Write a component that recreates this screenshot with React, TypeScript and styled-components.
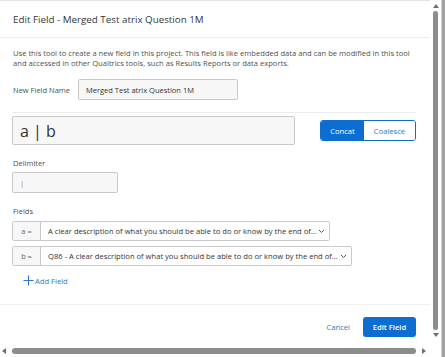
import styled, { createGlobalStyle } from "styled-components";

const GlobalStyle = createGlobalStyle`
  html, body {
    margin: 0;
    padding: 0;
    background: #ffffff;
  }
  body {
    font-family: "Open Sans", "Noto Sans", sans-serif;
    color: #333333;
  }
`;

const Frame = styled.div`
  width: 445px;
  height: 357px;
  display: grid;
  grid-template-columns: 430px 11px 4px;
  grid-template-rows: 345px 12px;
  background: #ffffff;
  overflow: hidden;
`;

const Dialog = styled.div`
  grid-column: 1;
  grid-row: 1;
  display: flex;
  flex-direction: column;
  border-top: 1px solid #e4e4e4;
  box-sizing: border-box;
`;

const Header = styled.div`
  height: 36px;
  flex: none;
  display: flex;
  align-items: center;
  padding: 0 13px;
  border-bottom: 1px solid #ececec;
  font-size: 9.8px;
  color: #353535;
`;

const Body = styled.div`
  flex: 1;
  padding: 10px 14px 0 12px;
  display: flex;
  flex-direction: column;
  align-items: flex-start;
`;

const Description = styled.p`
  margin: 0 0 0 1px;
  font-size: 7.6px;
  line-height: 10px;
  color: #505050;
  white-space: nowrap;
`;

const NameSection = styled.div`
  align-self: stretch;
  margin-top: 11px;
  padding-bottom: 12px;
  border-bottom: 1px solid #ececec;
  display: flex;
  align-items: center;
  gap: 8px;
`;

const Label = styled.span<{ $top?: number }>`
  display: block;
  margin-top: ${(p) => p.$top ?? 0}px;
  margin-left: 1px;
  font-size: 7.5px;
  line-height: 10px;
  color: #505050;
`;

const TextInput = styled.div<{ $w: number; $h: number; $size?: number }>`
  box-sizing: border-box;
  width: ${(p) => p.$w}px;
  height: ${(p) => p.$h}px;
  padding: 0 7px;
  display: flex;
  align-items: center;
  background: #f7f7f7;
  border: 1px solid #c9c9c9;
  border-radius: 2px;
  font-size: ${(p) => p.$size ?? 7.5}px;
  color: #333333;
`;

const FormulaRow = styled.div`
  align-self: stretch;
  margin-top: 3px;
  display: flex;
  align-items: center;
  justify-content: space-between;
`;

const Segmented = styled.div`
  display: flex;
  height: 21px;
  border: 1px solid #0b6ed0;
  border-radius: 3px;
  overflow: hidden;
  box-sizing: border-box;
`;

const Segment = styled.div<{ $active?: boolean; $w: number }>`
  width: ${(p) => p.$w}px;
  display: flex;
  align-items: center;
  justify-content: center;
  font-size: 7.6px;
  background: ${(p) => (p.$active ? "#0b6ed0" : "#ffffff")};
  color: ${(p) => (p.$active ? "#ffffff" : "#2a78c8")};
`;

const FieldRow = styled.div<{ $w: number; $top: number }>`
  box-sizing: border-box;
  width: ${(p) => p.$w}px;
  height: 20px;
  margin-top: ${(p) => p.$top}px;
  display: flex;
  border: 1px solid #c9c9c9;
  border-radius: 2px;
  background: #ffffff;
`;

const Prefix = styled.div`
  width: 27px;
  flex: none;
  display: flex;
  align-items: center;
  justify-content: center;
  background: #f7f7f7;
  border-right: 1px solid #c9c9c9;
  font-size: 7.4px;
  color: #666666;
`;

const SelectText = styled.div`
  flex: 1;
  display: flex;
  align-items: center;
  justify-content: space-between;
  padding: 0 4px 0 7px;
  font-size: 7.6px;
  color: #333333;
  white-space: nowrap;
`;

const AddField = styled.div`
  margin: 9px 0 0 11px;
  display: flex;
  align-items: center;
  gap: 1px;
  font-size: 7.6px;
  line-height: 10px;
  color: #2a78c8;
`;

const Footer = styled.div`
  height: 41px;
  flex: none;
  box-sizing: border-box;
  border-top: 1px solid #efefef;
  padding: 12px 14px 0 0;
  display: flex;
  justify-content: flex-end;
  align-items: flex-start;
  gap: 13px;
`;

const LinkButton = styled.div`
  height: 20px;
  display: flex;
  align-items: center;
  font-size: 7.6px;
  color: #2a78c8;
`;

const PrimaryButton = styled.div`
  width: 53px;
  height: 20px;
  display: flex;
  align-items: center;
  justify-content: center;
  border-radius: 3px;
  background: #0b6ed0;
  color: #ffffff;
  font-size: 7.6px;
  font-weight: 600;
`;

const VTrack = styled.div`
  grid-column: 2;
  grid-row: 1 / span 2;
  display: flex;
  flex-direction: column;
  align-items: center;
  padding: 4px 0 0;
  gap: 3px;
  background: #ffffff;
`;

const HTrack = styled.div`
  grid-column: 1;
  grid-row: 2;
  display: flex;
  align-items: center;
  padding: 0 4px 0 2px;
  gap: 6px;
`;

const Thumb = styled.div<{ $vertical?: boolean }>`
  background: #8c8c8c;
  border-radius: 3px;
  ${(p) =>
    p.$vertical
      ? "width: 5px; height: 319px;"
      : "height: 6px; flex: 1; margin-top: -1px;"}
`;

const Edge = styled.div`
  grid-column: 3;
  grid-row: 1 / span 2;
  background: #a2a2a2;
  border-left: 1px solid #cfcfcf;
`;

const Arrow = ({ dir }: { dir: "up" | "down" | "left" | "right" }) => {
  const pts = {
    up: "0,4 3,0 6,4",
    down: "0,0 3,4 6,0",
    left: "4,0 0,3 4,6",
    right: "0,0 4,3 0,6",
  }[dir];
  const vert = dir === "up" || dir === "down";
  return (
    <svg width={vert ? 6 : 4} height={vert ? 4 : 6} viewBox={vert ? "0 0 6 4" : "0 0 4 6"}>
      <polygon points={pts} fill="#6f6f6f" />
    </svg>
  );
};

const Chevron = () => (
  <svg width="7" height="5" viewBox="0 0 7 5">
    <path d="M1 1 L3.5 3.5 L6 1" stroke="#555" strokeWidth="1" fill="none" />
  </svg>
);

const Plus = () => (
  <svg width="11" height="11" viewBox="0 0 11 11">
    <path d="M5.5 0.5 V10.5 M0.5 5.5 H10.5" stroke="#2a78c8" strokeWidth="1.1" />
  </svg>
);

export default function App() {
  return (
    <>
      <GlobalStyle />
      <Frame>
        <Dialog>
          <Header>Edit Field - Merged Test atrix Question 1M</Header>
          <Body>
            <Description>
              Use this tool to create a new field in this project. This field is like embedded data and can be modified in this tool
              <br />
              and accessed in other Qualtrics tools, such as Results Reports or data exports.
            </Description>
            <NameSection>
              <Label>New Field Name</Label>
              <TextInput $w={160} $h={21}>Merged Test atrix Question 1M</TextInput>
            </NameSection>
            <FormulaRow>
              <TextInput $w={283} $h={29} $size={16}>a | b</TextInput>
              <Segmented>
                <Segment $active $w={43}>Concat</Segment>
                <Segment $w={51}>Coalesce</Segment>
              </Segmented>
            </FormulaRow>
            <Label $top={13}>Delimiter</Label>
            <TextInput $w={106} $h={21} style={{ marginTop: 4, color: "#888" }}>|</TextInput>
            <Label $top={13}>Fields</Label>
            <FieldRow $w={318} $top={5}>
              <Prefix>a =</Prefix>
              <SelectText>
                A clear description of what you should be able to do or know by the end of...
                <Chevron />
              </SelectText>
            </FieldRow>
            <FieldRow $w={340} $top={5}>
              <Prefix>b =</Prefix>
              <SelectText>
                Q86 - A clear description of what you should be able to do or know by the end of...
                <Chevron />
              </SelectText>
            </FieldRow>
            <AddField>
              <Plus />
              Add Field
            </AddField>
          </Body>
          <Footer>
            <LinkButton>Cancel</LinkButton>
            <PrimaryButton>Edit Field</PrimaryButton>
          </Footer>
        </Dialog>
        <VTrack>
          <Arrow dir="up" />
          <Thumb $vertical />
          <Arrow dir="down" />
        </VTrack>
        <HTrack>
          <Arrow dir="left" />
          <Thumb />
          <Arrow dir="right" />
        </HTrack>
        <Edge />
      </Frame>
    </>
  );
}
